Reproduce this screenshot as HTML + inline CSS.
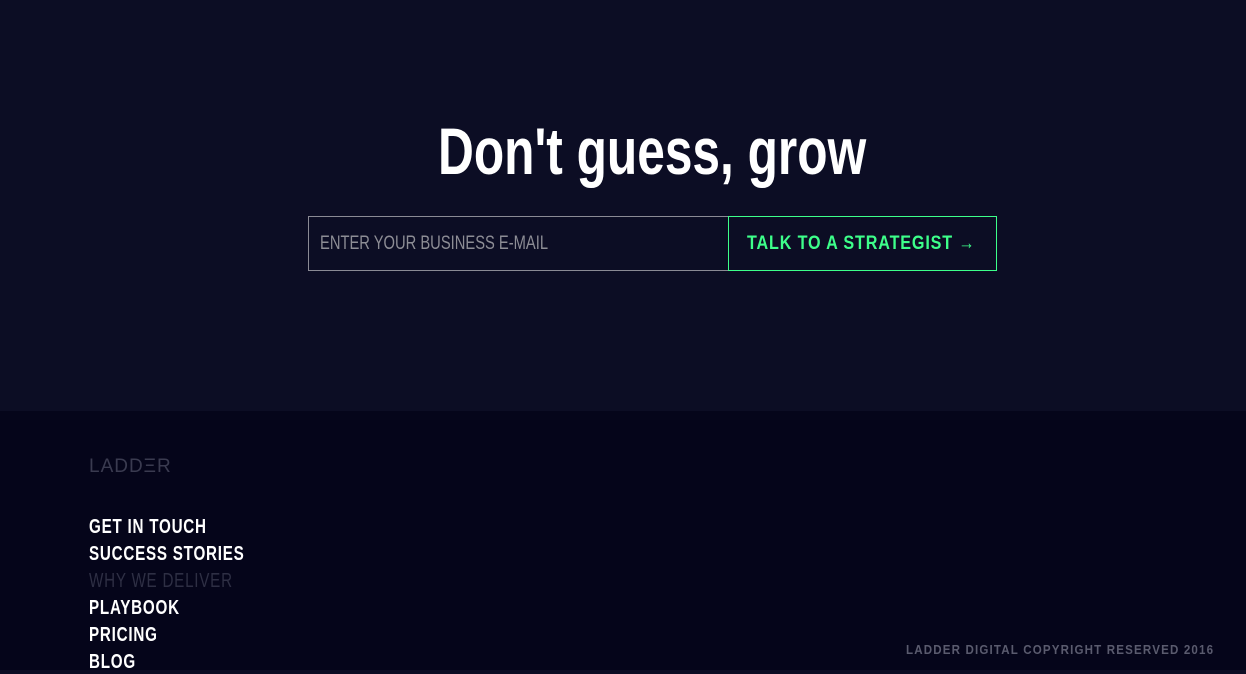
<!DOCTYPE html>
<html><head><meta charset="utf-8"><style>
*{margin:0;padding:0;box-sizing:border-box}
body{width:1246px;height:670px;overflow:hidden;background:#0c0d24;font-family:"Liberation Sans Narrow","Liberation Sans",sans-serif;position:relative}
.top{position:absolute;left:0;top:0;width:1246px;height:411px;background:#0c0d24}
.foot{position:absolute;left:0;top:411px;width:1246px;height:259px;background:#05051a}
.sq{display:inline-block;transform-origin:0 0;white-space:nowrap;position:absolute}
h1{position:absolute;left:438px;top:113px;font-size:66px;font-weight:bold;color:#fff;white-space:nowrap;transform-origin:0 0;transform:scaleX(0.752)}
.inp{position:absolute;left:308px;top:216px;width:421px;height:55px;border:1px solid #8a8a94}
.btn{position:absolute;left:728px;top:216px;width:269px;height:55px;border:1px solid #3dff8a}
.ph{left:320px;top:233px;font-size:19px;color:#8d8d95;transform:scaleX(0.775)}
.bt{left:747px;top:233px;font-size:19px;font-weight:bold;color:#3dff8a;letter-spacing:1px;transform:scaleX(0.85)}
.logo{left:89px;top:456px;font-size:19px;color:#3a3b50;letter-spacing:1px;font-weight:300}
.nav{left:89px;font-size:20px;font-weight:bold;color:#fff;letter-spacing:1px;transform:scaleX(0.76)}
.copy{left:906px;top:642px;font-size:13px;font-weight:bold;color:#5a5b6e;letter-spacing:1.3px;transform:scaleX(0.89)}
</style></head><body>
<div class="top"></div><div class="foot"></div>
<h1>Don't guess, grow</h1>
<div class="inp"></div><div class="btn"></div>
<span class="sq ph">ENTER YOUR BUSINESS E-MAIL</span>
<span class="sq bt">TALK TO A STRATEGIST →</span>
<span class="sq logo">LADD&#926;R</span>
<span class="sq nav" style="top:516px">GET IN TOUCH</span>
<span class="sq nav" style="top:543px">SUCCESS STORIES</span>
<span class="sq nav" style="top:570px;color:#2e2f44;font-weight:normal">WHY WE DELIVER</span>
<span class="sq nav" style="top:597px">PLAYBOOK</span>
<span class="sq nav" style="top:624px">PRICING</span>
<span class="sq nav" style="top:651px">BLOG</span>
<span class="sq copy">LADDER DIGITAL COPYRIGHT RESERVED 2016</span>
</body></html>
